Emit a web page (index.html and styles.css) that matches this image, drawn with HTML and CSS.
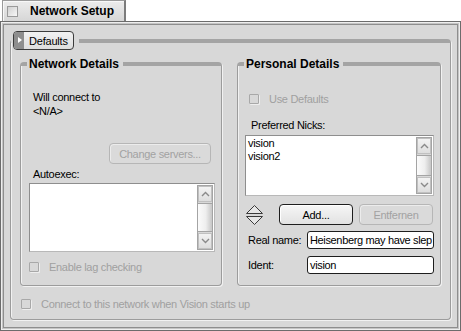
FILE: index.html
```html
<!DOCTYPE html>
<html lang="en">
<head>
    <meta charset="UTF-8">
    <title>Network Setup</title>
    <link rel="stylesheet" href="styles.css">
</head>
<body>
    <div class="tab">
        <span class="close-box"></span>
        <span class="tab-title">Network Setup</span>
    </div>

    <div class="window">
        <fieldset class="group">
            <legend class="group-legend">
                <button class="disclosure"><span class="disclosure-arrow"></span>Defaults</button>
            </legend>

            <div class="columns">
                <fieldset class="box box-network">
                    <legend class="box-title">Network Details</legend>
                    <div class="label first">Will connect to</div>
                    <div class="label">&lt;N/A&gt;</div>
                    <button class="btn btn-servers" disabled>Change servers...</button>
                    <div class="label autoexec">Autoexec:</div>
                    <div class="scroll-field autoexec-field">
                        <div class="field-body"></div>
                        <div class="scrollbar">
                            <div class="arrow"><svg width="9" height="6" viewBox="0 0 9 6"><polyline points="1,5 4.5,1.5 8,5" fill="none" stroke="#8a8a8a" stroke-width="1.4"/></svg></div>
                            <div class="thumb"></div>
                            <div class="arrow"><svg width="9" height="6" viewBox="0 0 9 6"><polyline points="1,1 4.5,4.5 8,1" fill="none" stroke="#8a8a8a" stroke-width="1.4"/></svg></div>
                        </div>
                    </div>
                    <label class="check disabled lag"><span class="check-box"></span>Enable lag checking</label>
                </fieldset>

                <fieldset class="box box-personal">
                    <legend class="box-title">Personal Details</legend>
                    <label class="check disabled use-defaults"><span class="check-box"></span>Use Defaults</label>
                    <div class="label nicks-label">Preferred Nicks:</div>
                    <div class="scroll-field nicks-field">
                        <div class="field-body">
                            <div class="nick">vision</div>
                            <div class="nick">vision2</div>
                        </div>
                        <div class="scrollbar">
                            <div class="arrow"><svg width="9" height="6" viewBox="0 0 9 6"><polyline points="1,5 4.5,1.5 8,5" fill="none" stroke="#8a8a8a" stroke-width="1.4"/></svg></div>
                            <div class="thumb"></div>
                            <div class="arrow"><svg width="9" height="6" viewBox="0 0 9 6"><polyline points="1,1 4.5,4.5 8,1" fill="none" stroke="#8a8a8a" stroke-width="1.4"/></svg></div>
                        </div>
                    </div>
                    <div class="nick-controls">
                        <svg class="order-icon" width="17" height="20" viewBox="0 0 17 20">
                            <polygon points="8.5,0.5 16.5,8.5 0.5,8.5" fill="#e6e6e6" stroke="#3a3a3a"/>
                            <polygon points="0.5,11.5 16.5,11.5 8.5,19.5" fill="#e6e6e6" stroke="#3a3a3a"/>
                        </svg>
                        <button class="btn btn-add">Add...</button>
                        <button class="btn btn-remove" disabled>Entfernen</button>
                    </div>
                    <div class="form-row real-name">
                        <span class="form-label">Real name:</span>
                        <span class="text-input">Heisenberg may have slep</span>
                    </div>
                    <div class="form-row ident">
                        <span class="form-label">Ident:</span>
                        <span class="text-input">vision</span>
                    </div>
                </fieldset>
            </div>

            <label class="check disabled startup"><span class="check-box"></span>Connect to this network when Vision starts up</label>
        </fieldset>
    </div>
</body>
</html>
```

FILE: styles.css
```css
body {
    margin: 0;
    width: 461px;
    height: 331px;
    overflow: hidden;
    background: #ffffff;
    font-family: "Liberation Sans", Arial, sans-serif;
    font-size: 11px;
    letter-spacing: -0.3px;
    color: #000000;
}
.tab {
    display: flex;
    align-items: center;
    gap: 12px;
    box-sizing: border-box;
    width: 124px;
    height: 21px;
    margin-left: 2px;
    padding-left: 4px;
    border: 1px solid #9a9a9a;
    border-right: 2px solid #7c7c7c;
    border-bottom: none;
    background: linear-gradient(#ececec, #d6d6d6);
    box-shadow: inset 1px 1px 0 #f8f8f8;
}
.close-box {
    width: 9px;
    height: 9px;
    border: 1px solid #9a9a9a;
    background: linear-gradient(135deg, #d0d0d0, #f8f8f8);
}
.tab-title {
    font-size: 12px;
    font-weight: bold;
    letter-spacing: 0;
}
.window {
    box-sizing: border-box;
    height: 310px;
    padding: 9px;
    border: 1px solid #6c6c6c;
    background: #d8d8d8;
    box-shadow: inset 0 0 0 1px #eeeeee, inset 0 0 0 2px #c4c4c4, inset 0 0 0 3px #8e8e8e;
}
.group {
    margin: 0;
    padding: 0 9px 8px 9px;
    min-width: 0;
    height: 289px;
    box-sizing: border-box;
    border: 1px solid #9c9c9c;
    border-top: 4px solid #a4a4a4;
    border-radius: 4px;
    box-shadow: 1px 1px 0 #f2f2f2, inset 1px 0 0 #f2f2f2;
}
.group-legend {
    padding: 0 5px 0 2px;
    margin-left: -9px;
}
.disclosure {
    display: flex;
    align-items: center;
    height: 19px;
    padding: 0 5px 0 0;
    border: 1px solid #3c3c3c;
    border-radius: 4px;
    overflow: hidden;
    background: linear-gradient(#f2f2f2, #dedede);
    font-family: inherit;
    font-size: 11px;
    letter-spacing: -0.2px;
    color: #000000;
}
.disclosure-arrow {
    width: 10px;
    height: 100%;
    margin-right: 5px;
    background: #8e8e8e;
    position: relative;
}
.disclosure-arrow::after {
    content: "";
    position: absolute;
    left: 4px;
    top: 5px;
    border-left: 4px solid #ffffff;
    border-top: 3px solid transparent;
    border-bottom: 3px solid transparent;
}
.columns {
    display: flex;
    gap: 15px;
    padding-top: 7px;
}
.box {
    margin: 0;
    min-width: 0;
    height: 229px;
    box-sizing: border-box;
    display: flex;
    flex-direction: column;
    border: 1px solid #9c9c9c;
    border-top: 4px solid #a4a4a4;
    border-radius: 4px;
    box-shadow: 1px 1px 0 #f2f2f2, inset 1px 0 0 #f2f2f2;
}
.box-network {
    width: 202px;
    padding: 0 6px 0 8px;
}
.box-personal {
    width: 204px;
    padding: 0 6px 0 7px;
}
.box-title {
    margin-left: -2px;
    padding: 0 4px 0 2px;
    font-size: 12px;
    font-weight: bold;
    letter-spacing: 0;
    line-height: 14px;
}
.box-personal .box-title {
    margin-left: -1px;
}
.label {
    line-height: 14px;
    margin-left: 4px;
}
.label.first {
    margin-top: 19px;
}
.btn {
    height: 21px;
    padding: 0;
    border: 1px solid #3a3a3a;
    border-radius: 4px;
    background: linear-gradient(#f6f6f6, #e2e2e2);
    box-shadow: inset 1px 1px 0 #ffffff;
    font-family: inherit;
    font-size: 11px;
    letter-spacing: -0.3px;
    color: #000000;
}
.btn:disabled {
    border-color: #b6b6b6;
    background: #dadada;
    color: #a2a2a2;
    box-shadow: inset 1px 1px 0 #ececec;
}
.btn-servers {
    align-self: flex-end;
    width: 102px;
    margin: 25px 4px 0 0;
}
.label.autoexec {
    margin-top: 3px;
}
.scroll-field {
    display: flex;
    box-sizing: border-box;
    border: 1px solid #8e8e8e;
    border-right-color: #b8b8b8;
    border-bottom-color: #b8b8b8;
    background: #ffffff;
}
.autoexec-field {
    height: 69px;
    margin-top: 2px;
}
.field-body {
    flex: 1;
    padding: 1px 2px;
}
.nick {
    line-height: 13px;
}
.scrollbar {
    display: flex;
    flex-direction: column;
    width: 14px;
    margin: 1px;
    border: 1px solid #a4a4a4;
    background: #d8d8d8;
}
.arrow {
    display: flex;
    align-items: center;
    justify-content: center;
    height: 16px;
    background: linear-gradient(#f4f4f4, #dcdcdc);
    box-shadow: inset 0 0 0 1px #c0c0c0;
}
.thumb {
    flex: 1;
    margin: 1px 0;
    border-top: 1px solid #a4a4a4;
    border-bottom: 1px solid #a4a4a4;
    background: linear-gradient(to right, #fbfbfb, #eeeeee 55%, #c6c6c6);
}
.check {
    display: flex;
    align-items: center;
    gap: 10px;
    line-height: 14px;
}
.check.disabled {
    color: #a0a0a0;
}
.check-box {
    width: 8px;
    height: 8px;
    border: 1px solid #a8a8a8;
    border-radius: 1px;
    box-shadow: 1px 1px 0 #eeeeee;
}
.check.lag {
    margin-top: 8px;
}
.check.use-defaults {
    margin: 21px 0 0 4px;
}
.label.nicks-label {
    margin: 12px 0 0 6px;
}
.nicks-field {
    height: 61px;
    margin-top: 3px;
}
.nick-controls {
    display: flex;
    align-items: center;
    margin-top: 8px;
}
.order-icon {
    margin: 0 16px 0 1px;
}
.btn-add {
    width: 74px;
    margin-right: 6px;
    border-color: #1e1e1e;
}
.btn-remove {
    width: 74px;
}
.form-row {
    display: flex;
    align-items: center;
}
.form-row.real-name {
    margin-top: 6px;
}
.form-row.ident {
    margin-top: 7px;
}
.form-label {
    width: 59px;
    padding-left: 3px;
}
.text-input {
    box-sizing: border-box;
    width: 127px;
    height: 18px;
    padding-left: 2px;
    border: 1px solid #1e1e1e;
    border-radius: 3px;
    background: #ffffff;
    font-size: 11px;
    letter-spacing: -0.35px;
    line-height: 16px;
    white-space: nowrap;
    overflow: hidden;
}
.check.startup {
    margin: 11px 0 0 1px;
}
```
